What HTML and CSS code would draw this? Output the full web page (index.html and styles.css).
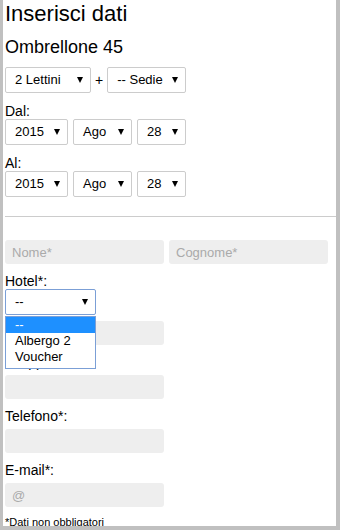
FILE: index.html
```html
<!DOCTYPE html>
<html lang="it">
<head>
    <meta charset="UTF-8">
    <meta name="viewport" content="width=device-width, initial-scale=1.0">
    <title>Inserisci dati</title>
    <link rel="stylesheet" href="styles.css">
</head>
<body>
    <div class="frame">
        <form class="booking">
            <h1>Inserisci dati</h1>
            <h2>Ombrellone 45</h2>
            <div class="row guests">
                <div class="select lettini"><span>2 Lettini</span></div>
                <span class="plus">+</span>
                <div class="select sedie"><span>-- Sedie</span></div>
            </div>

            <label class="date-label">Dal:</label>
            <div class="row">
                <div class="select year"><span>2015</span></div>
                <div class="select month"><span>Ago</span></div>
                <div class="select day"><span>28</span></div>
            </div>

            <label class="date-label">Al:</label>
            <div class="row">
                <div class="select year"><span>2015</span></div>
                <div class="select month"><span>Ago</span></div>
                <div class="select day"><span>28</span></div>
            </div>

            <hr>

            <div class="row names">
                <input class="field" type="text" placeholder="Nome*">
                <input class="field" type="text" placeholder="Cognome*">
            </div>

            <label class="field-label hotel-label">Hotel*:</label>
            <div class="hotel">
                <div class="select hotel-select"><span>--</span></div>
                <ul class="dropdown">
                    <li class="active">--</li>
                    <li>Albergo 2</li>
                    <li>Voucher</li>
                </ul>
            </div>
            <input class="field room" type="text">

            <label class="field-label">Gruppo:</label>
            <input class="field" type="text">

            <label class="field-label">Telefono*:</label>
            <input class="field" type="tel">

            <label class="field-label">E-mail*:</label>
            <input class="field" type="email" placeholder="@">

            <p class="note">*Dati non obbligatori</p>
        </form>
    </div>
</body>
</html>
```

FILE: styles.css
```css
body {
    margin: 0;
    background: #c0c0c0;
    color: #000;
    font-family: 'Liberation Sans', Arial, sans-serif;
}
.frame {
    width: 333px;
    height: 526px;
    margin-left: 3px;
    background: #fff;
    overflow: hidden;
}
.booking {
    padding-left: 2px;
}
h1 {
    font-size: 22px;
    font-weight: normal;
    line-height: 28px;
    margin: 0;
}
h2 {
    font-size: 18px;
    font-weight: normal;
    line-height: 22px;
    margin: 8px 0 0;
}
.row {
    display: flex;
    align-items: center;
    gap: 5px;
}
.row.guests {
    margin-top: 9px;
    gap: 0;
}
.plus {
    font-size: 14px;
    margin: 0 4px;
}
.select {
    position: relative;
    box-sizing: border-box;
    height: 26px;
    padding-left: 9px;
    border: 1px solid #ccc;
    border-radius: 2px;
    font-size: 13px;
    line-height: 24px;
    background: #fff;
}
.select::after {
    content: '';
    position: absolute;
    right: 7px;
    top: 50%;
    margin-top: -3px;
    border-left: 3px solid transparent;
    border-right: 3px solid transparent;
    border-top: 6px solid #000;
}
.lettini { width: 86px; }
.sedie { width: 79px; }
.year { width: 63px; }
.month { width: 59px; }
.day { width: 49px; }
label {
    display: block;
    font-size: 14px;
    line-height: 16px;
}
.date-label {
    margin-top: 10px;
}
hr {
    height: 0;
    border: 0;
    border-top: 1px solid #ccc;
    margin: 19px 0 0;
}
.row.names {
    margin-top: 23px;
}
.field {
    display: block;
    box-sizing: border-box;
    width: 159px;
    height: 24px;
    padding: 0 7px;
    border: none;
    border-radius: 3px;
    background: #eee;
    font-family: inherit;
    font-size: 13px;
    color: #000;
}
.field::placeholder {
    color: #aaa;
}
.field-label {
    margin: 9px 0 5px;
}
.hotel-label {
    margin-bottom: 0;
}
.hotel {
    position: relative;
}
.hotel-select {
    width: 91px;
    border-color: #7b9fd6;
}
.dropdown {
    position: absolute;
    top: 27px;
    left: 0;
    width: 91px;
    box-sizing: border-box;
    margin: 0;
    padding: 0 0 3px;
    list-style: none;
    background: #fff;
    border: 1px solid #7b9fd6;
    font-size: 13px;
    line-height: 16px;
    z-index: 2;
}
.dropdown li {
    padding-left: 9px;
}
.dropdown li.active {
    background: #1e90ff;
    color: #fff;
}
.room {
    margin-top: 6px;
}
.note {
    margin: 9px 0 0;
    font-size: 11px;
    line-height: 13px;
}
```
